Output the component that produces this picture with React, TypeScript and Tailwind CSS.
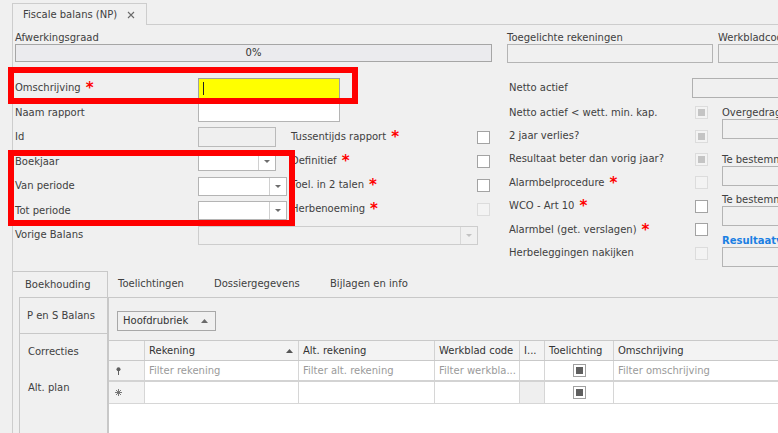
import React from 'react';

type BoxKind = 'on' | 'off' | 'ind';

const Req = () => (
  <span className="ml-[5px] text-[15px] font-bold leading-[10px] text-[#ff0000]">*</span>
);

const Label = ({ text, req, w }: { text: string; req?: boolean; w: string }) => (
  <div className={`flex shrink-0 items-center whitespace-nowrap ${w}`}>
    <span>{text}</span>
    {req && <Req />}
  </div>
);

const Check = ({ kind }: { kind: BoxKind }) => {
  if (kind === 'on') return <div className="h-[13px] w-[13px] shrink-0 border border-[#a3a3a3] bg-white" />;
  if (kind === 'off') return <div className="h-[13px] w-[13px] shrink-0 border border-[#dcdcdc] bg-[#f3f3f3]" />;
  return (
    <div className="flex h-[13px] w-[13px] shrink-0 items-center justify-center border border-[#dcdcdc] bg-[#f3f3f3]">
      <div className="h-[7px] w-[7px] bg-[#c4c4c4]" />
    </div>
  );
};

const Combo = ({ w, disabled }: { w: string; disabled?: boolean }) => (
  <div
    className={`flex h-[19px] shrink-0 border ${w} ${
      disabled ? 'border-[#cdcdcd] bg-[#f0f0f0]' : 'border-[#b4b4b4] bg-white'
    }`}
  >
    <div className="flex-1" />
    <div className={`flex w-[17px] items-center justify-center border-l ${disabled ? 'border-[#d8d8d8]' : 'border-[#d0d0d0]'}`}>
      <svg width="6" height="3" viewBox="0 0 6 3">
        <path d="M0 0h6L3 3z" fill={disabled ? '#c2c2c2' : '#6d6d6d'} />
      </svg>
    </div>
  </div>
);

const GridCheck = () => (
  <div className="flex h-[13px] w-[13px] items-center justify-center border border-[#a0a0a0] bg-white">
    <div className="h-[7px] w-[7px] bg-[#5f5f5f]" />
  </div>
);

const UpArrow = ({ color }: { color: string }) => (
  <svg width="7" height="4" viewBox="0 0 7 4">
    <path d="M0 4h7L3.5 0z" fill={color} />
  </svg>
);

const rightChecks: { text: string; req?: boolean; kind: BoxKind }[] = [
  { text: 'Netto actief < wett. min. kap.', kind: 'ind' },
  { text: '2 jaar verlies?', kind: 'ind' },
  { text: 'Resultaat beter dan vorig jaar?', kind: 'ind' },
  { text: 'Alarmbelprocedure', req: true, kind: 'off' },
  { text: 'WCO - Art 10', req: true, kind: 'on' },
  { text: 'Alarmbel (get. verslagen)', req: true, kind: 'on' },
  { text: 'Herbeleggingen nakijken', kind: 'off' },
];

const midChecks: { text: string; kind: BoxKind }[] = [
  { text: 'Tussentijds rapport', kind: 'on' },
  { text: 'Definitief', kind: 'on' },
  { text: 'Toel. in 2 talen', kind: 'on' },
  { text: 'Herbenoeming', kind: 'off' },
];

export default function App() {
  return (
    <div className="relative h-[433px] w-[778px] overflow-hidden bg-[#f0f0f0] font-['DejaVu_Sans',sans-serif] text-[10px] leading-[12px] text-[#404040]">
      {/* document tabs */}
      <div className="flex h-[25px] items-end">
        <div className="ml-[12px] flex h-[22px] w-[135px] shrink-0 items-center border-l border-r border-t border-[#cdcdcd] pl-[10px]">
          <span className="whitespace-nowrap">Fiscale balans (NP)</span>
          <svg className="ml-auto mr-[11px]" width="8" height="8" viewBox="0 0 8 8">
            <path d="M1 1l6 6M7 1l-6 6" stroke="#6a6a6a" strokeWidth="1.1" />
          </svg>
        </div>
        <div className="h-full flex-1 border-b border-[#cdcdcd]" />
      </div>

      <div className="ml-[12px] h-[408px] border-l border-[#cdcdcd]">
        {/* top status row */}
        <div className="flex pl-[2px] pt-[7px]">
          <div className="w-[477px] shrink-0">
            <div className="h-[12px]">Afwerkingsgraad</div>
            <div className="flex h-[18px] items-center justify-center border border-[#a6a6a6] bg-[#ebebee] text-[#333]">0%</div>
          </div>
          <div className="ml-[15px] w-[206px] shrink-0">
            <div className="h-[12px] whitespace-nowrap">Toegelichte rekeningen</div>
            <div className="h-[19px] border border-[#b4b4b4]" />
          </div>
          <div className="ml-[5px] w-[120px] shrink-0">
            <div className="h-[12px] whitespace-nowrap">Werkbladcode</div>
            <div className="h-[19px] border border-[#b4b4b4]" />
          </div>
        </div>

        {/* form */}
        <div className="mt-[13px] flex h-[195px] pl-[2px]">
          <div className="w-[494px] shrink-0">
            <div className="flex h-[24.5px] items-center">
              <Label text="Omschrijving" req w="w-[183px]" />
              <div className="flex h-[21px] w-[142px] items-center border border-[#a0a0a0] bg-[#ffff00]">
                <div className="ml-[4px] h-[13px] w-px bg-[#222]" />
              </div>
            </div>
            <div className="flex h-[24.5px] items-center">
              <Label text="Naam rapport" w="w-[183px]" />
              <div className="h-[19px] w-[142px] border border-[#b4b4b4] bg-white" />
            </div>
            <div className="flex">
              <div className="w-[276px] shrink-0">
                <div className="flex h-[24.5px] items-center">
                  <Label text="Id" w="w-[183px]" />
                  <div className="h-[20px] w-[78px] border border-[#bababa] bg-[#efefef]" />
                </div>
                <div className="flex h-[24.5px] items-center">
                  <Label text="Boekjaar" w="w-[183px]" />
                  <Combo w="w-[78px]" />
                </div>
                <div className="flex h-[24.5px] items-center">
                  <Label text="Van periode" w="w-[183px]" />
                  <Combo w="w-[89px]" />
                </div>
                <div className="flex h-[24.5px] items-center">
                  <Label text="Tot periode" w="w-[183px]" />
                  <Combo w="w-[89px]" />
                </div>
              </div>
              <div className="w-[199px] shrink-0">
                {midChecks.map((c) => (
                  <div key={c.text} className="flex h-[24px] items-center">
                    <Label text={c.text} req w="w-[186px]" />
                    <Check kind={c.kind} />
                  </div>
                ))}
              </div>
            </div>
            <div className="flex h-[24.5px] items-center">
              <Label text="Vorige Balans" w="w-[183px]" />
              <Combo w="w-[280px]" disabled />
            </div>
          </div>

          <div className="shrink-0">
            <div className="flex h-[24px] items-center">
              <Label text="Netto actief" w="w-[183px]" />
              <div className="h-[20px] w-[200px] shrink-0 border border-[#b0b0b0]" />
            </div>
            <div className="mt-[1px] flex">
              <div className="w-[199px] shrink-0">
                {rightChecks.map((c) => (
                  <div key={c.text} className="flex h-[23.4px] items-center">
                    <Label text={c.text} req={c.req} w="w-[186px]" />
                    <Check kind={c.kind} />
                  </div>
                ))}
              </div>
              <div className="ml-[14px] w-[200px] shrink-0 whitespace-nowrap">
                <div className="mt-[6px] h-[12px]">Overgedragen resultaat</div>
                <div className="h-[20px] border border-[#b4b4b4]" />
                <div className="mt-[15px] h-[12px]">Te bestemmen resultaat</div>
                <div className="h-[20px] border border-[#b4b4b4]" />
                <div className="mt-[8px] h-[12px]">Te bestemmen winst</div>
                <div className="h-[20px] border border-[#b4b4b4]" />
                <div className="mt-[9px] h-[12px] font-bold text-[#1b7fe3]">Resultaatverwerking</div>
                <div className="h-[20px] border border-[#b4b4b4]" />
              </div>
            </div>
          </div>
        </div>

        {/* lower tabs */}
        <div className="flex h-[26px] whitespace-nowrap">
          <div className="flex w-[95px] shrink-0 items-center border-r border-t border-[#c8c8c8] pl-[12px]">Boekhouding</div>
          <div className="flex w-[96px] shrink-0 items-center pl-[10px]">Toelichtingen</div>
          <div className="flex w-[116px] shrink-0 items-center pl-[10px]">Dossiergegevens</div>
          <div className="flex items-center pl-[10px]">Bijlagen en info</div>
        </div>
        <div className="flex h-[136px]">
          <div className="ml-[6px] w-[89px] shrink-0 border-l border-r border-[#c8c8c8]">
            <div className="flex h-[37px] items-center border-b border-t border-[#c8c8c8] pl-[7px]">P en S Balans</div>
            <div className="flex h-[36px] items-center pl-[8px]">Correcties</div>
            <div className="flex h-[36px] items-center pl-[8px]">Alt. plan</div>
          </div>
          <div className="min-w-0 flex-1 overflow-hidden border-l border-t border-[#c8c8c8]">
            <div className="h-[42px] pl-[8px] pt-[13px]">
              <div className="flex h-[20px] w-[99px] items-center justify-between border border-[#a8a8a8] pl-[5px] pr-[7px] text-[#333]">
                <span>Hoofdrubriek</span>
                <UpArrow color="#6a6a6a" />
              </div>
            </div>
            <div className="h-[200px] w-[720px] bg-white">
              <div className="grid h-[21px] grid-cols-[36px_154px_136px_85px_25px_69px_215px] border-b border-t border-[#c9c9c9] bg-[#f3f3f3] text-[#333]">
                <div className="border-r border-[#d2d2d2]" />
                <div className="flex items-center justify-between border-r border-[#d2d2d2] pl-[4px] pr-[5px]">
                  <span>Rekening</span>
                  <UpArrow color="#555" />
                </div>
                <div className="flex items-center border-r border-[#d2d2d2] pl-[4px]">Alt. rekening</div>
                <div className="flex items-center whitespace-nowrap border-r border-[#d2d2d2] pl-[4px]">Werkblad code</div>
                <div className="flex items-center border-r border-[#d2d2d2] pl-[4px]">I...</div>
                <div className="flex items-center border-r border-[#d2d2d2] pl-[4px]">Toelichting</div>
                <div className="flex items-center pl-[4px]">Omschrijving</div>
              </div>
              <div className="grid h-[21px] grid-cols-[36px_154px_136px_85px_25px_69px_215px] border-b-2 border-[#d3d3d3] whitespace-nowrap text-[#9a9a9a]">
                <div className="flex items-center border-r border-[#d6d6d6] bg-[#f3f3f3] pl-[7px]">
                  <svg width="5" height="8" viewBox="0 0 5 8">
                    <circle cx="2.5" cy="2.2" r="2" fill="#606060" />
                    <path d="M2.5 4v4" stroke="#606060" strokeWidth="1" />
                  </svg>
                </div>
                <div className="flex items-center border-r border-[#d6d6d6] pl-[4px]">Filter rekening</div>
                <div className="flex items-center border-r border-[#d6d6d6] pl-[4px]">Filter alt. rekening</div>
                <div className="flex items-center border-r border-[#d6d6d6] pl-[4px]">Filter werkbla...</div>
                <div className="border-r border-[#d6d6d6]" />
                <div className="flex items-center justify-center border-r border-[#d6d6d6]">
                  <GridCheck />
                </div>
                <div className="flex items-center pl-[4px]">Filter omschrijving</div>
              </div>
              <div className="grid h-[22px] grid-cols-[36px_154px_136px_85px_25px_69px_215px] border-b border-[#d6d6d6]">
                <div className="flex items-center border-r border-[#d6d6d6] bg-[#f3f3f3] pl-[6px]">
                  <svg width="7" height="7" viewBox="0 0 7 7">
                    <path d="M3.5 0v7M0 3.5h7M1 1l5 5M6 1l-5 5" stroke="#6a6a6a" strokeWidth="0.9" />
                  </svg>
                </div>
                <div className="border-r border-[#d6d6d6]" />
                <div className="border-r border-[#d6d6d6]" />
                <div className="border-r border-[#d6d6d6]" />
                <div className="border-r border-[#d6d6d6] bg-[#efefef]" />
                <div className="flex items-center justify-center border-r border-[#d6d6d6]">
                  <GridCheck />
                </div>
                <div />
              </div>
            </div>
          </div>
        </div>
      </div>

      {/* annotation frames */}
      <div className="absolute left-[8px] top-[67px] h-[37px] w-[350px] border-[6px] border-[#ff0000]" />
      <div className="absolute left-[8px] top-[150px] h-[76px] w-[287px] border-[6px] border-[#ff0000]" />
    </div>
  );
}
